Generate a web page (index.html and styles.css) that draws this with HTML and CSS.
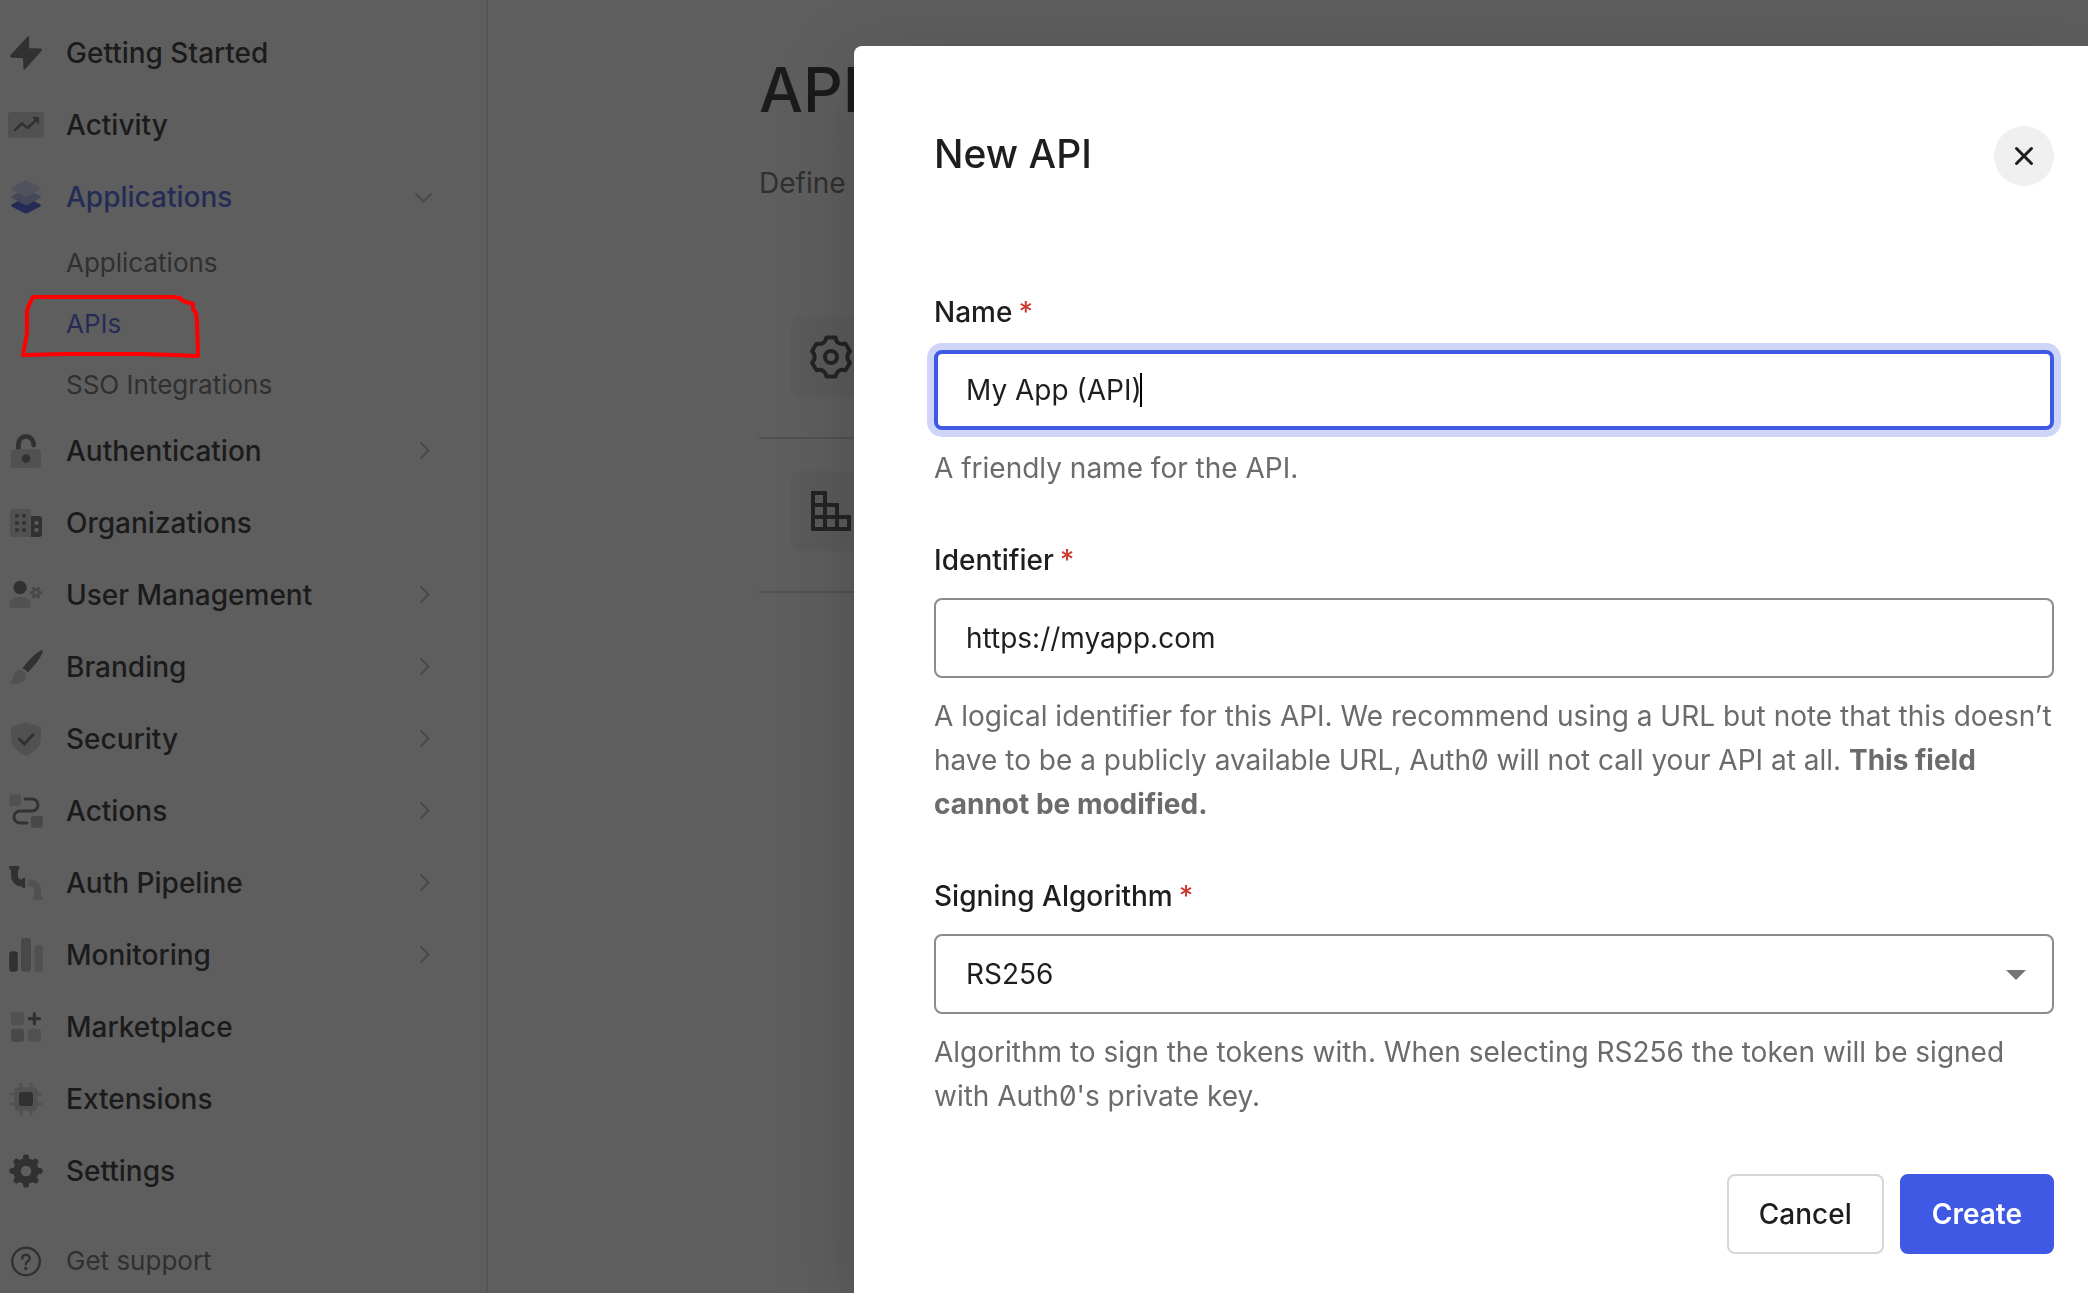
FILE: index.html
```html
<!DOCTYPE html>
<html lang="en">
<head>
<meta charset="utf-8">
<meta name="viewport" content="width=device-width, initial-scale=1">
<title>New API</title>
<link rel="stylesheet" href="styles.css">
</head>
<body>
<div class="app">
  <nav class="sidebar" aria-label="Main">
    <a class="nav-item" href="#">
      <svg class="nav-icon" viewBox="0 0 36 36"><path class="dark dark-line" stroke-width="2" stroke-linejoin="round" d="M20.300 2.300 L3 21 L3.600 21.700 L15.900 22.300 L16.400 33.700 L33 15.200 L32.600 14.500 L20 13.900 Z"/></svg>
      <span class="nav-label">Getting Started</span>
    </a>
    <a class="nav-item" href="#">
      <svg class="nav-icon" viewBox="0 0 36 36"><rect class="light" y="5" width="36" height="26" rx="3"/><path class="dark-line" stroke-width="2.600" fill="none" stroke-linecap="round" stroke-linejoin="round" d="M7 23L14 16.500L19.500 21L28 13"/><path class="dark" d="M24 10H30Q31 10 31 11V18Z"/></svg>
      <span class="nav-label">Activity</span>
    </a>
    <a class="nav-item active" href="#" aria-expanded="true">
      <svg class="nav-icon" viewBox="0 0 36 36">
        <path class="layer-low" d="M16.500 18.600Q18 17.900 19.500 18.600L32.400 25.500Q33.600 26.500 32.400 27.500L19.500 34.200Q18 34.900 16.500 34.200L3.600 27.500Q2.400 26.500 3.600 25.500Z"/>
        <path class="layer-mid" d="M16.500 10.100Q18 9.400 19.500 10.100L32.400 17Q33.600 18 32.400 19L19.500 25.700Q18 26.400 16.500 25.700L3.600 19Q2.400 18 3.600 17Z"/>
        <path class="layer-top" d="M16.500 1.600Q18 .9 19.500 1.600L32.400 8.500Q33.600 9.500 32.400 10.500L19.500 17.200Q18 17.900 16.500 17.200L3.600 10.500Q2.400 9.500 3.600 8.500Z"/>
      </svg>
      <span class="nav-label">Applications</span>
      <svg class="chevron" viewBox="0 0 32 32"><path d="M8 13L15.500 20.500L23 13"/></svg>
    </a>
    <div class="subnav">
      <a href="#">Applications</a>
      <a class="active" href="#">APIs</a>
      <a href="#">SSO Integrations</a>
    </div>
    <a class="nav-item" href="#">
      <svg class="nav-icon" viewBox="0 0 36 36"><rect class="light" x="3" y="16.300" width="30" height="18.700" rx="3"/><circle class="dark" cx="18" cy="25.500" r="4.300"/><path class="dark-line" fill="none" stroke-width="4.800" d="M10.400 16.300V11a7.600 7.600 0 0 1 15.200 0v.5"/><circle class="dark" cx="25.600" cy="12" r="2.400"/></svg>
      <span class="nav-label">Authentication</span>
      <svg class="chevron" viewBox="0 0 32 32"><path d="M13 8L20.500 15.500L13 23"/></svg>
    </a>
    <a class="nav-item" href="#">
      <svg class="nav-icon" viewBox="0 0 36 36"><path class="light" d="M5 4H20a3 3 0 0 1 3 3V32H5a3 3 0 0 1-3-3V7a3 3 0 0 1 3-3Z"/><path class="dark" d="M7.200 9h3.600v3.600H7.200zM14.200 9h3.600v3.600h-3.600zM7.200 16.200h3.600v3.600H7.200zM14.200 16.200h3.600v3.600h-3.600zM7.200 23.200h3.600v3.600H7.200zM14.200 23.200h3.600v3.600h-3.600z"/><path class="dark" fill-rule="evenodd" d="M23 11H31a3 3 0 0 1 3 3V29a3 3 0 0 1-3 3H23ZM26.700 16.200v3.600h3.600v-3.600zM26.700 23.200v3.600h3.600v-3.600z"/></svg>
      <span class="nav-label">Organizations</span>
    </a>
    <a class="nav-item" href="#">
      <svg class="nav-icon" viewBox="0 0 36 36"><circle class="dark" cx="12" cy="10.500" r="6.700"/><path class="light" d="M9 20H15a8 8 0 0 1 8 8v1a2 2 0 0 1-2 2H3.300a2 2 0 0 1-2-2v-1A8 8 0 0 1 9 20Z"/><g class="mid-line" fill="none" stroke-width="2.600"><circle cx="28" cy="15.700" r="3"/><path stroke-width="3" stroke-linecap="round" d="M32 15.700h1M23 15.700h1M30 12.200l.5-.8M30 19.200l.5.8M26 12.200l-.5-.8M26 19.200l-.5.8"/></g></svg>
      <span class="nav-label">User Management</span>
      <svg class="chevron" viewBox="0 0 32 32"><path d="M13 8L20.500 15.500L13 23"/></svg>
    </a>
    <a class="nav-item" href="#">
      <svg class="nav-icon" viewBox="0 0 36 36"><path class="dark" d="M14.500 19.200C19 13 27 4.500 33 1.300Q35.200 .8 34.700 3C32.500 9.500 26 17.500 19.700 23.500Q17.800 20.500 14.500 19.200Z"/><path class="light" d="M13.500 20.700Q18 22.500 18 26.500C18 32 13 36.500 1.500 34.500Q1 33.700 2.500 33C4.500 31.500 4 29 6.300 25Q9 20.200 13.500 20.700Z"/></svg>
      <span class="nav-label">Branding</span>
      <svg class="chevron" viewBox="0 0 32 32"><path d="M13 8L20.500 15.500L13 23"/></svg>
    </a>
    <a class="nav-item" href="#">
      <svg class="nav-icon" viewBox="0 0 36 36"><path class="light" d="M16.500 1.700Q18 1 19.500 1.700L31 5.300Q33 6 33 8.500V18C33 25.500 26 31 19.500 34.200Q18 34.800 16.500 34.200C10 31 3 25.500 3 18V8.500Q3 6 5 5.300Z"/><path class="dark-line" fill="none" stroke-width="3" stroke-linecap="round" d="M11.500 18.300L16.300 23L25 13.800"/></svg>
      <span class="nav-label">Security</span>
      <svg class="chevron" viewBox="0 0 32 32"><path d="M13 8L20.500 15.500L13 23"/></svg>
    </a>
    <a class="nav-item" href="#">
      <svg class="nav-icon" viewBox="0 0 36 36"><rect class="light" x="1.200" y="1.200" width="11.800" height="11.800" rx="2"/><rect class="mid" x="23" y="23" width="11.800" height="11.800" rx="2"/><path class="dark-line" fill="none" stroke-width="3" stroke-linecap="round" d="M17 6H24a6 6 0 0 1 0 12H12a6 6 0 0 0 0 12H19"/></svg>
      <span class="nav-label">Actions</span>
      <svg class="chevron" viewBox="0 0 32 32"><path d="M13 8L20.500 15.500L13 23"/></svg>
    </a>
    <a class="nav-item" href="#">
      <svg class="nav-icon" viewBox="0 0 36 36"><rect class="dark" x="1.200" y="1" width="10.300" height="3.600" rx="1"/><path class="dark-line" fill="none" stroke-width="7" d="M6.500 3V10.500A7.500 7.500 0 0 0 14 18h2"/><rect class="dark" x="14.200" y="13" width="3" height="10" rx="1"/><path class="light-line" fill="none" stroke-width="7" d="M20.200 18h2A7.500 7.500 0 0 1 29.700 25.500V33"/><rect class="light" x="24.700" y="31.500" width="10.300" height="3.500" rx="1"/></svg>
      <span class="nav-label">Auth Pipeline</span>
      <svg class="chevron" viewBox="0 0 32 32"><path d="M13 8L20.500 15.500L13 23"/></svg>
    </a>
    <a class="nav-item" href="#">
      <svg class="nav-icon" viewBox="0 0 36 36"><rect class="dark" x="1.200" y="14.300" width="8.600" height="20.500" rx="3"/><rect class="mid" x="13" y="1" width="10" height="33.800" rx="3"/><rect class="light" x="26.300" y="8" width="8.600" height="26.800" rx="3"/></svg>
      <span class="nav-label">Monitoring</span>
      <svg class="chevron" viewBox="0 0 32 32"><path d="M13 8L20.500 15.500L13 23"/></svg>
    </a>
    <a class="nav-item" href="#">
      <svg class="nav-icon" viewBox="0 0 36 36"><rect class="light" x="3" y="3" width="13.200" height="13.200" rx="3"/><rect class="mid" x="3" y="19.800" width="13.200" height="13.200" rx="3"/><rect class="light" x="19.800" y="19.800" width="13.200" height="13.200" rx="3"/><path class="dark-line" stroke-width="3.200" stroke-linecap="round" d="M26.400 4.600V14.800M21.300 9.700H31.500"/></svg>
      <span class="nav-label">Marketplace</span>
    </a>
    <a class="nav-item" href="#">
      <svg class="nav-icon" viewBox="0 0 36 36"><path class="light-line" stroke-width="3" stroke-linecap="round" d="M13 3V33M23 3V33M3 13H33M3 23H33"/><rect class="light" x="6.200" y="6.200" width="23.600" height="23.600" rx="4"/><rect class="dark" x="11" y="11" width="14" height="14" rx="2.500"/></svg>
      <span class="nav-label">Extensions</span>
    </a>
    <a class="nav-item" href="#">
      <svg class="nav-icon" viewBox="0 0 36 36"><circle class="dark-line" fill="none" stroke-width="7.500" cx="18" cy="18" r="9"/><path class="dark-line" stroke-width="6" stroke-linecap="round" d="M18 7V4.300M18 29v2.700M7 18H4.300M29 18h2.700M10.200 10.200L8.600 8.600M25.800 10.200l1.600-1.600M10.200 25.800l-1.600 1.600M25.800 25.800l1.600 1.600"/></svg>
      <span class="nav-label">Settings</span>
    </a>
    <a class="nav-item support" href="#">
      <svg class="nav-icon" viewBox="0 0 36 36"><g class="dark-line" fill="none" stroke-width="2.400" stroke-linecap="round"><circle cx="18" cy="18.500" r="13.800"/><path d="M14.300 15.500C14.300 13 16 11.800 18 11.800S21.700 13.200 21.700 15.200C21.700 18 17.700 18 17.700 21.500"/></g><circle class="dark" cx="17.700" cy="25.500" r="1.700"/></svg>
      <span class="nav-label">Get support</span>
    </a>
  </nav>

  <main class="content">
    <h1>APIs</h1>
    <p class="intro">Define APIs that you can consume from your authorized applications.</p>
    <ul class="api-list">
      <li><span class="tile"><svg viewBox="0 0 48 48"><g fill="none" stroke-width="4"><circle cx="24" cy="24" r="6"/><path stroke-linejoin="round" d="M19.500 4.500H28.500C29 9.500 32.500 12 37.500 10.500L38.500 10.800L43 18.300C39.500 21.500 39.500 26.500 43 29.700L38.500 37.200C33 35.800 29.500 38.500 28.500 43.500H19.500C18.500 38.500 15 35.800 9.500 37.200L5 29.700C8.500 26.500 8.500 21.500 5 18.300L9.500 10.800C15 12 18.500 9.500 19.500 4.500Z"/></g></svg></span></li>
      <li><span class="tile"><svg viewBox="0 0 48 48"><path fill="none" stroke-width="4" d="M6 6H18V42M6 4V42H42V30H6M6 18H30V42"/></svg></span></li>
    </ul>
  </main>
</div>

<div class="overlay">
  <section class="modal" role="dialog" aria-modal="true" aria-labelledby="dialog-title">
    <header class="modal-header">
      <h2 id="dialog-title">New API</h2>
      <button class="close" type="button" aria-label="Close"><svg viewBox="0 0 24 24"><path d="M4.500 4.500L19.500 19.500M19.500 4.500L4.500 19.500"/></svg></button>
    </header>
    <form class="form">
      <div class="field">
        <label for="api-name">Name<span class="required">*</span></label>
        <div class="control caret"><input class="focused" id="api-name" type="text" value="My App (API)"></div>
        <p class="hint">A friendly name for the API.</p>
      </div>
      <div class="field">
        <label for="api-id">Identifier<span class="required">*</span></label>
        <div class="control"><input id="api-id" type="text" value="https://myapp.com"></div>
        <p class="hint">A logical identifier for this API. We recommend using a URL but note that this doesn’t have to be a publicly available URL, Auth0 will not call your API at all. <strong>This field cannot be modified.</strong></p>
      </div>
      <div class="field">
        <label for="api-alg">Signing Algorithm<span class="required">*</span></label>
        <div class="control">
          <select id="api-alg"><option>RS256</option><option>HS256</option></select>
          <svg class="arrow" viewBox="0 0 20 10"><path d="M0 0H20L10 10Z"/></svg>
        </div>
        <p class="hint">Algorithm to sign the tokens with. When selecting RS256 the token will be signed with Auth0's private key.</p>
      </div>
      <div class="actions">
        <button class="btn" type="button">Cancel</button>
        <button class="btn primary" type="submit">Create</button>
      </div>
    </form>
  </section>
</div>

<svg class="marker" viewBox="0 0 180 64" aria-hidden="true"><path d="M3 61L7 39V18L8 13L13 3H153L160 4L163 7L173 10V15L176 19L177 28L178 62L153 61L123 60H47Z"/></svg>
</body>
</html>
```
FILE: styles.css
```css
* {
  box-sizing: border-box;
}

body {
  margin: 0;
  background: #fff;
  color: #1e1e1e;
  font-family: Inter, "Liberation Sans", sans-serif;
  font-size: 28px;
  line-height: 44px;
  font-variant-numeric: slashed-zero;
}

h1, h2, p, ul {
  margin: 0;
  padding: 0;
  font-weight: 400;
}

a {
  color: inherit;
  text-decoration: none;
}

button, input, select {
  font: inherit;
  color: inherit;
}

.app {
  display: flex;
  height: 100vh;
  overflow: hidden;
}

/* Sidebar */
.sidebar {
  flex: none;
  width: 488px;
  padding-top: 17px;
  border-right: 2px solid #e4e4e4;
}

.nav-item {
  display: flex;
  align-items: center;
  gap: 22px;
  height: 72px;
  padding: 0 46px 0 8px;
  font-weight: 500;
}

.nav-label {
  flex: 1;
}

.nav-icon {
  flex: none;
  width: 36px;
  height: 36px;
}

.chevron {
  flex: none;
  width: 32px;
  height: 32px;
  fill: none;
  stroke: #b4b4b4;
  stroke-width: 2;
  stroke-linecap: round;
}

.active {
  color: #3f59e4;
}

.subnav {
  display: flex;
  flex-direction: column;
  gap: 1px;
  color: #656565;
  font-size: 26px;
}

.subnav a {
  padding: 8px 0 8px 66px;
}

.subnav .active {
  color: #3f59e4;
}

.support {
  height: 60px;
  margin-top: 24px;
  color: #656565;
  font-size: 26px;
  font-weight: 400;
}

.dark { fill: #6a6a6a; }
.mid { fill: #b4b4b4; }
.light { fill: #d4d4d4; }
.dark-line { stroke: #6a6a6a; }
.mid-line { stroke: #b4b4b4; }
.light-line { stroke: #d4d4d4; }
.layer-top { fill: #d0d8fa; }
.layer-mid { fill: #aab4ee; }
.layer-low { fill: #3f59e4; }

/* Page behind the dialog */
.content {
  flex: 1;
  min-width: 0;
  padding: 50px 80px 0 271px;
}

.content h1 {
  font-size: 62px;
  font-weight: 500;
  line-height: 80px;
}

.intro {
  margin-top: 31px;
  color: #656565;
}

.api-list {
  margin-top: 80px;
  list-style: none;
}

.api-list li {
  padding: 32px 32px 40px;
  border-bottom: 2px solid #d4d4d4;
}

.tile {
  display: flex;
  align-items: center;
  justify-content: center;
  width: 80px;
  height: 80px;
  border-radius: 8px;
  background: #f2f2f2;
}

.tile svg {
  width: 48px;
  height: 48px;
  stroke: #3c3c3c;
}

/* Dialog */
.overlay {
  position: fixed;
  inset: 0;
  display: flex;
  padding: 46px 0 0 854px;
  overflow: hidden;
  background: rgba(25, 25, 25, 0.7);
}

.modal {
  flex: 1;
  padding: 80px 34px 39px 80px;
  border-radius: 8px 0 0 0;
  background: #fff;
  box-shadow: 0 20px 80px rgba(0, 0, 0, 0.2);
}

.modal-header {
  display: flex;
  justify-content: space-between;
  height: 60px;
  margin-bottom: 104px;
}

.modal-header h2 {
  font-size: 39px;
  font-weight: 500;
  line-height: 56px;
}

.close {
  display: flex;
  align-items: center;
  justify-content: center;
  width: 60px;
  height: 60px;
  padding: 0;
  border: 0;
  border-radius: 50%;
  background: #f0f0f0;
}

.close svg {
  width: 24px;
  height: 24px;
  fill: none;
  stroke: #1e1e1e;
  stroke-width: 3;
  stroke-linecap: round;
}

.form {
  display: flex;
  flex-direction: column;
  gap: 48px;
}

.field {
  display: flex;
  flex-direction: column;
  gap: 16px;
}

.field label {
  font-weight: 500;
}

.required {
  margin-left: 6px;
  color: #ca3a31;
}

.control {
  position: relative;
}

.control input,
.control select {
  display: block;
  width: 100%;
  height: 80px;
  padding: 0 30px;
  border: 2px solid #8c8c8c;
  border-radius: 8px;
  background: #fff;
  outline: 0;
  appearance: none;
}

.control .focused {
  padding: 0 28px;
  border: 4px solid #3f59e4;
  box-shadow: 0 0 0 7px #cfd5f9;
}

/* text cursor */
.caret::after {
  content: "";
  position: absolute;
  top: 23px;
  left: 206px;
  width: 2px;
  height: 34px;
  background: #000;
}

.arrow {
  position: absolute;
  top: 36px;
  right: 28px;
  width: 20px;
  height: 10px;
  fill: #757575;
  pointer-events: none;
}

.hint {
  color: #6b6b6b;
}

.hint strong {
  font-weight: 700;
}

.actions {
  display: flex;
  justify-content: flex-end;
  gap: 16px;
  margin-top: 8px;
}

.btn {
  height: 80px;
  padding: 0 30px;
  border: 2px solid #d6d6d6;
  border-radius: 8px;
  background: #fff;
  font-weight: 500;
}

.primary {
  border-color: #3f59e4;
  background: #3f59e4;
  color: #fff;
  font-weight: 600;
}

/* Hand-drawn highlight around the APIs link */
.marker {
  position: absolute;
  top: 294px;
  left: 20px;
  width: 180px;
  height: 64px;
  overflow: visible;
  fill: none;
  stroke: #f00;
  stroke-width: 4;
  stroke-linejoin: round;
}
```
